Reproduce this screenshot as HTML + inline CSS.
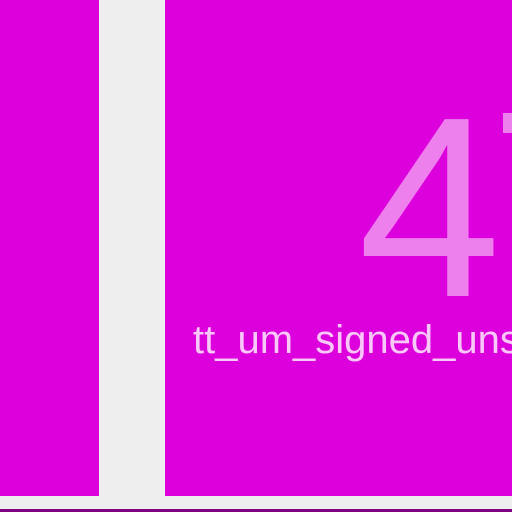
<!DOCTYPE html>
<html><head><style>
html,body{margin:0;padding:0;width:512px;height:512px;overflow:hidden;background:#eeeeee;font-family:"Liberation Sans",sans-serif}
#w{position:absolute;left:0;top:0;width:512px;height:512px;overflow:hidden}
.p{position:absolute;background:#dc00dc}
.t{position:absolute;white-space:nowrap}
</style></head><body><div id="w">
<div class="p" style="left:0;top:0;width:99px;height:496px"></div>
<div class="p" style="left:165px;top:0;width:347px;height:496px"></div>
<div style="position:absolute;left:0;top:509px;width:512px;height:3px;background:#800080"></div>
<div class="t" style="left:358px;top:58px;font-size:257px;line-height:300px;color:#ee80ee">4</div>
<div style="position:absolute;left:503px;top:113px;width:9px;height:20px;background:#ee80ee"></div>
<div class="t" style="left:193px;top:318px;font-size:40px;line-height:44px;color:#f8c8f8">tt_um_signed_unsigned</div>
</div></body></html>
